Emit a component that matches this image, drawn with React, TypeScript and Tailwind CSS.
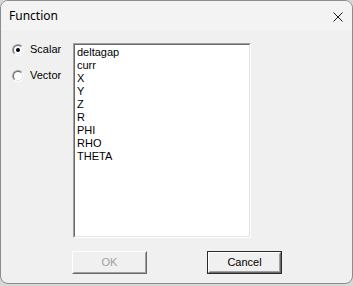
import React from 'react';

const ITEMS = ['deltagap', 'curr', 'X', 'Y', 'Z', 'R', 'PHI', 'RHO', 'THETA'];

function Radio({ label, checked }: { label: string; checked?: boolean }) {
  return (
    <div className="flex items-center h-[13px]">
      <div className="w-[12px] h-[12px] rounded-full border border-t-[#a0a0a0] border-l-[#a0a0a0] border-r-[#ffffff] border-b-[#ffffff]">
        <div className="w-full h-full rounded-full border border-t-[#696969] border-l-[#696969] border-r-[#e3e3e3] border-b-[#e3e3e3] bg-white flex items-center justify-center">
          {checked && <div className="w-[4px] h-[4px] rounded-full bg-black" />}
        </div>
      </div>
      <span className="ml-[6px]">{label}</span>
    </div>
  );
}

function Button({ label, disabled, isDefault }: { label: string; disabled?: boolean; isDefault?: boolean }) {
  return (
    <div className={`w-[75px] h-[23px] ${isDefault ? 'border border-[#2b2b2b]' : ''}`}>
      <div className="w-full h-full border border-t-[#ffffff] border-l-[#ffffff] border-r-[#696969] border-b-[#696969]">
        <div className="w-full h-full border border-t-[#f0f0f0] border-l-[#f0f0f0] border-r-[#a0a0a0] border-b-[#a0a0a0] flex items-center justify-center">
          <span className={disabled ? 'text-[#a0a0a0]' : 'text-black'}>{label}</span>
        </div>
      </div>
    </div>
  );
}

export default function App() {
  return (
    <div className="w-[353px] h-[286px] bg-[#d8d8d8] overflow-hidden">
      <div
        className="w-[353px] h-[284px] rounded-[8px] border border-[#8c8c8c] bg-[#f0f0f0] flex flex-col overflow-hidden"
      >
        <div className="h-[30px] bg-[#f3f3f3] flex items-center justify-between pl-[8px] pr-[9px] shrink-0">
          <span className="text-[12px] text-black" style={{ fontFamily: '"Noto Sans", sans-serif' }}>
            Function
          </span>
          <svg width="10" height="10" viewBox="0 0 10 10" className="mt-[1px]">
            <path d="M0.5 0.5 L9.5 9.5 M9.5 0.5 L0.5 9.5" stroke="#1a1a1a" strokeWidth="1" />
          </svg>
        </div>
        <div
          className="flex-1 flex flex-col pt-[12px] pl-[11px] text-[11px] leading-[13px] text-black"
          style={{ fontFamily: '"Liberation Sans", Arial, sans-serif' }}
        >
          <div className="flex">
            <div className="flex flex-col gap-[13px] w-[61px] pt-[0px]">
              <Radio label="Scalar" checked />
              <Radio label="Vector" />
            </div>
            <div className="w-[178px] h-[195px] border border-t-[#a0a0a0] border-l-[#a0a0a0] border-r-[#ffffff] border-b-[#ffffff]">
              <div className="w-full h-full border border-t-[#696969] border-l-[#696969] border-r-[#e3e3e3] border-b-[#e3e3e3] bg-white pl-[2px] pt-[1px]">
                {ITEMS.map((it) => (
                  <div key={it} className="h-[13px] leading-[13px]">{it}</div>
                ))}
              </div>
            </div>
          </div>
          <div className="flex mt-[13px] pl-[60px] gap-[60px]">
            <Button label="OK" disabled />
            <Button label="Cancel" isDefault />
          </div>
        </div>
      </div>
    </div>
  );
}
